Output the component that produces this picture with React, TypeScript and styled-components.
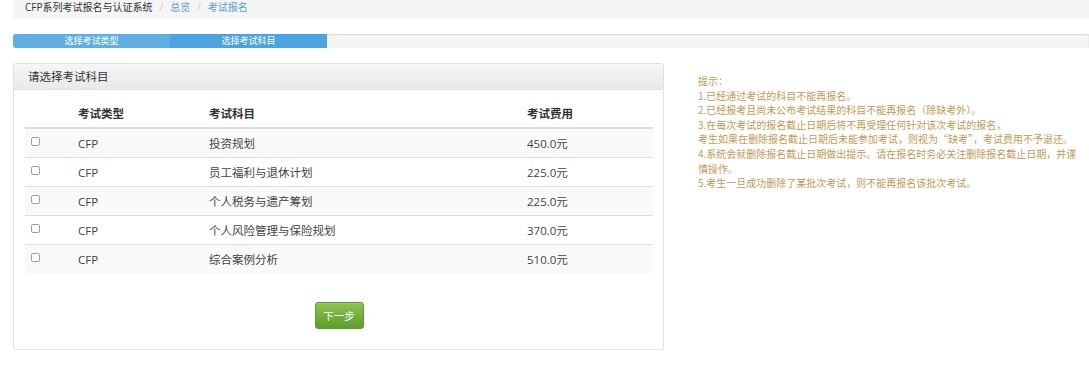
import { FunctionComponent } from "react";
import styled, { createGlobalStyle } from "styled-components";

interface Subject {
  type: string;
  name: string;
  fee: string;
}

const subjects: Subject[] = [
  { type: "CFP", name: "投资规划", fee: "450.0元" },
  { type: "CFP", name: "员工福利与退休计划", fee: "225.0元" },
  { type: "CFP", name: "个人税务与遗产筹划", fee: "225.0元" },
  { type: "CFP", name: "个人风险管理与保险规划", fee: "370.0元" },
  { type: "CFP", name: "综合案例分析", fee: "510.0元" },
];

const tips: string[] = [
  "提示：",
  "1.已经通过考试的科目不能再报名。",
  "2.已经报考且尚未公布考试结果的科目不能再报名（除缺考外）。",
  "3.在每次考试的报名截止日期后将不再受理任何针对该次考试的报名，",
  "考生如果在删除报名截止日期后未能参加考试，则视为“缺考”，考试费用不予退还。",
  "4.系统会就删除报名截止日期做出提示。请在报名时务必关注删除报名截止日期，并谨慎操作。",
  "5.考生一旦成功删除了某批次考试，则不能再报名该批次考试。",
];

const App: FunctionComponent = () => {
  return (
    <Page>
      <GlobalStyle />
      <Breadcrumb>
        <Crumb>CFP系列考试报名与认证系统</Crumb>
        <Divider>/</Divider>
        <CrumbLink>总览</CrumbLink>
        <Divider>/</Divider>
        <CrumbLink>考试报名</CrumbLink>
      </Breadcrumb>

      <Progress>
        <Step light>选择考试类型</Step>
        <Step>选择考试科目</Step>
      </Progress>

      <Content>
        <Panel>
          <PanelHeading>请选择考试科目</PanelHeading>
          <PanelBody>
            <Table>
              <HeadRow>
                <Cell />
                <Cell>考试类型</Cell>
                <Cell>考试科目</Cell>
                <Cell>考试费用</Cell>
              </HeadRow>
              {subjects.map((s, i) => (
                <Row key={s.name} striped={i % 2 === 0}>
                  <Cell>
                    <Check type="checkbox" />
                  </Cell>
                  <Cell>{s.type}</Cell>
                  <Cell>{s.name}</Cell>
                  <Cell>{s.fee}</Cell>
                </Row>
              ))}
            </Table>
            <Actions>
              <NextButton>下一步</NextButton>
            </Actions>
          </PanelBody>
        </Panel>

        <Tips>
          {tips.map((t) => (
            <TipLine key={t}>{t}</TipLine>
          ))}
        </Tips>
      </Content>
    </Page>
  );
};

const GlobalStyle = createGlobalStyle`
  body {
    margin: 0;
    background: #fff;
    font-family: "Open Sans", "Noto Sans CJK SC", sans-serif;
    color: #333;
  }
`;

const Page = styled.div`
  padding-left: 13px;
`;

const Breadcrumb = styled.div`
  display: flex;
  align-items: center;
  height: 19px;
  padding: 0 0 5px 12px;
  box-sizing: border-box;
  background: #f5f5f5;
  border-bottom-left-radius: 4px;
  font-size: 10px;
  line-height: 14px;
`;

const Crumb = styled.span`
  color: #333;
`;

const CrumbLink = styled.span`
  color: #5b9bd5;
`;

const Divider = styled.span`
  color: #ccc;
  padding: 0 7px;
`;

const Progress = styled.div`
  display: flex;
  margin-top: 15px;
  height: 14px;
  background: #f5f5f5;
  box-shadow: inset 0 1px 2px rgba(0, 0, 0, 0.12);
  border-radius: 3px 0 0 3px;
  overflow: hidden;
`;

interface StepProps {
  readonly light?: boolean;
}

const Step = styled.div<StepProps>`
  width: 157px;
  height: 14px;
  background: ${(props) => (props.light ? "#5dafe3" : "#4ba3df")};
  color: #fff;
  font-size: 9px;
  line-height: 14px;
  text-align: center;
`;

const Content = styled.div`
  display: flex;
  align-items: flex-start;
  margin-top: 15px;
`;

const Panel = styled.div`
  width: 651px;
  height: 287px;
  box-sizing: border-box;
  border: 1px solid #e0e0e0;
  border-radius: 3px;
  box-shadow: 0 1px 1px rgba(0, 0, 0, 0.05);
  flex-shrink: 0;
`;

const PanelHeading = styled.div`
  height: 25px;
  padding-left: 14px;
  background: linear-gradient(#f6f6f6, #e9e9e9);
  border-bottom: 1px solid #e0e0e0;
  font-size: 11.5px;
  line-height: 25px;
  color: #333;
`;

const PanelBody = styled.div`
  padding: 8px 10px 0 11px;
`;

const Table = styled.div`
  width: 628px;
`;

const RowBase = styled.div`
  display: grid;
  grid-template-columns: 53px 131px 318px 1fr;
  height: 29px;
  align-items: center;
  font-size: 11.5px;
`;

const HeadRow = styled(RowBase)`
  border-bottom: 2px solid #ddd;
  font-weight: 600;
  color: #333;
`;

interface RowProps {
  readonly striped: boolean;
}

const Row = styled(RowBase)<RowProps>`
  height: 28px;
  background: ${(props) => (props.striped ? "#f9f9f9" : "#fff")};
  border-top: 1px solid #ddd;
  &:nth-child(2) {
    border-top: none;
  }
  color: #444;
`;

const Cell = styled.div`
  display: flex;
  align-items: center;
  white-space: nowrap;
  &:first-child {
    padding-left: 6px;
  }
`;

const Check = styled.input`
  appearance: none;
  width: 9px;
  height: 9px;
  margin: 0 0 3px;
  border: 1px solid #a0a0a0;
  border-radius: 2px;
  background: #fff;
`;

const Actions = styled.div`
  display: flex;
  justify-content: center;
  padding-top: 29px;
`;

const NextButton = styled.button`
  width: 49px;
  height: 27px;
  border: 1px solid #5d9a2f;
  border-radius: 3px;
  background: linear-gradient(#8bc34f, #5e9c2c);
  color: #fff;
  font-family: "Open Sans", "Noto Sans CJK SC", sans-serif;
  font-size: 10.5px;
  padding: 0;
  box-shadow: inset 0 1px 0 rgba(255, 255, 255, 0.15);
`;

const Tips = styled.div`
  width: 388px;
  margin: 11px 0 0 34px;
  color: #c29a55;
  font-family: "Noto Sans CJK SC", sans-serif;
  font-size: 10px;
  line-height: 14.6px;
`;

const TipLine = styled.div``;

export default App;
